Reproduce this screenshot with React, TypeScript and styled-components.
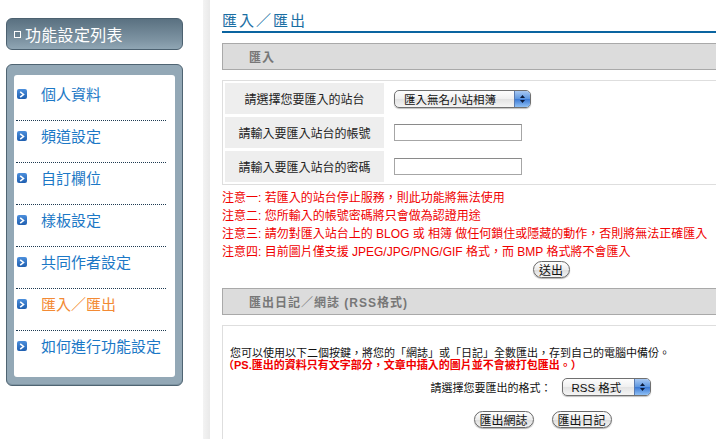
import React from "react";
import styled, { createGlobalStyle } from "styled-components";

const Global = createGlobalStyle`
  html, body { margin: 0; padding: 0; background: #fff; overflow: hidden; }
  body { font-family: "Liberation Sans", "Noto Sans CJK TC", sans-serif; }
`;

const Page = styled.div`
  display: flex;
  align-items: stretch;
  width: 900px;
  height: 439px;
`;

const Sidebar = styled.div`
  width: 177px;
  padding: 18px 20px 0 6px;
  flex: none;
`;

const SideHeader = styled.div`
  height: 30px;
  border: 1px solid #4c6170;
  border-radius: 6px;
  background: linear-gradient(#5a7181, #7d93a2 70%, #90a6b4);
  display: flex;
  align-items: center;
  padding-left: 7px;
  gap: 4px;
  color: #fff;
  font-size: 16px;
  letter-spacing: 0.3px;
`;

const HeaderIcon = styled.span`
  width: 5px;
  height: 5px;
  border: 1px solid #fff;
  background: #6a8090;
  flex: none;
`;

const ListFrame = styled.div`
  margin-top: 14px;
  border: 1px solid #4f6472;
  border-radius: 6px;
  background: #93a8b6;
  padding: 10px 7px 8px 7px;
  box-shadow: inset 0 -1px 0 #7e94a2;
`;

const ListInner = styled.div`
  background: #fff;
  border-radius: 3px;
  padding: 4px 0 4px 0;
`;

const Item = styled.div<{ $last?: boolean; $active?: boolean }>`
  display: flex;
  align-items: center;
  margin: 0 9px 0 2px;
  padding: 6px 0 15px 1px;
  line-height: 20px;
  border-bottom: ${(p) => (p.$last ? "1px solid transparent" : "1px dotted #1d3a52")};
  font-size: 15px;
  color: ${(p) => (p.$active ? "#f38a34" : "#1c78c6")};
`;

const Bullet = styled.span`
  width: 10px;
  height: 10px;
  border-radius: 2px;
  background: linear-gradient(#4c8fdc, #1f5fb0);
  display: flex;
  align-items: center;
  justify-content: center;
  margin-right: 14px;
  flex: none;
  margin-top: -2px;
`;

const Strip = styled.div`
  width: 7px;
  flex: none;
  background: linear-gradient(90deg, #f3f3f3, #e9e9e9);
`;

const Main = styled.div`
  width: 658px;
  padding-left: 12px;
  flex: none;
`;

const Title = styled.div`
  padding-top: 12px;
  line-height: 17px;
  padding-bottom: 2px;
  border-bottom: 2px solid #0a64a0;
  color: #1a6ea3;
  font-size: 15px;
  letter-spacing: 2px;
`;

const SectionHeader = styled.div`
  margin-top: 10px;
  height: 25px;
  border: 1px solid #a9a9a9;
  background: #dcdcdc;
  display: flex;
  align-items: center;
  padding-left: 26px;
  color: #777;
  font-size: 12px;
  letter-spacing: 1px;
  font-weight: bold;
`;

const FormBox = styled.div`
  margin-top: 10px;
  border: 1px solid #dedede;
  padding: 2px;
  display: flex;
  flex-direction: column;
  gap: 3px;
`;

const FormRow = styled.div`
  display: flex;
  height: 31px;
  align-items: stretch;
`;

const LabelCell = styled.div`
  width: 159px;
  background: #eeeeee;
  display: flex;
  align-items: center;
  justify-content: center;
  font-size: 12px;
  color: #222;
`;

const ValueCell = styled.div`
  display: flex;
  align-items: center;
  padding-left: 10px;
`;

const SelectBox = styled.div<{ $w: number }>`
  width: ${(p) => p.$w}px;
  height: 16px;
  border: 1px solid #707070;
  border-radius: 5px;
  display: flex;
  overflow: hidden;
  background: linear-gradient(#fdfdfd, #f0f0f0 50%, #e2e2e2 51%, #f5f5f5);
  box-shadow: 0 1px 1px rgba(0,0,0,0.25);
  font-size: 11.5px;
  color: #111;
`;

const SelectText = styled.div`
  flex: 1;
  display: flex;
  align-items: center;
  padding-left: 9px;
`;

const SelectArrow = styled.div`
  width: 15px;
  border-left: 1px solid #5a7bb0;
  background: linear-gradient(#a8c8f2, #5c96e0 50%, #3a78d4 51%, #8fc0f5);
  display: flex;
  align-items: center;
  justify-content: center;
`;

const TextInput = styled.div`
  width: 126px;
  height: 15px;
  border: 1px solid #a6a6a6;
  border-top-color: #8a8a8a;
  background: #fff;
`;

const Notes = styled.div`
  padding-top: 4px;
  font-size: 12px;
  line-height: 18px;
  color: #f00000;
`;

const Center = styled.div<{ $gap?: number; $top?: number; $shift?: number }>`
  display: flex;
  justify-content: center;
  align-items: center;
  gap: ${(p) => p.$gap ?? 0}px;
  margin-top: ${(p) => p.$top ?? 0}px;
  padding-right: ${(p) => p.$shift ?? 0}px;
`;

const Button = styled.div<{ $w: number }>`
  width: ${(p) => p.$w}px;
  height: 15px;
  border: 1px solid #6a6a6a;
  border-radius: 9px;
  background: linear-gradient(#ffffff, #ececec 50%, #dcdcdc 51%, #f4f4f4);
  box-shadow: 0 1px 1px rgba(0,0,0,0.3);
  display: flex;
  align-items: center;
  justify-content: center;
  font-size: 12px;
  color: #111;
`;

const ExportBox = styled.div`
  margin-top: 10px;
  border: 1px solid #dedede;
  border-bottom: none;
  height: 130px;
  padding: 21px 0 0 7px;
`;

const ExportText = styled.div`
  font-size: 11px;
  line-height: 12px;
  color: #111;
`;

const ExportNote = styled.div`
  font-size: 11px;
  line-height: 12px;
  color: #f00000;
  font-weight: bold;
  margin-left: -7px;
`;

const FormatLabel = styled.span`
  font-size: 11px;
  color: #111;
  margin-right: 10px;
`;

const Arrows = () => (
  <svg width="7" height="10" viewBox="0 0 7 10">
    <path d="M3.5 1 L6 4 H1 Z" fill="#0a1a3a" />
    <path d="M3.5 9 L6 6 H1 Z" fill="#0a1a3a" />
  </svg>
);

const Chevron = () => (
  <svg width="6" height="7" viewBox="0 0 6 7">
    <path d="M1.2 0.8 L4.5 3.5 L1.2 6.2" stroke="#fff" strokeWidth="1.6" fill="none" />
  </svg>
);

const Select = ({ w, text }: { w: number; text: string }) => (
  <SelectBox $w={w}>
    <SelectText>{text}</SelectText>
    <SelectArrow>
      <Arrows />
    </SelectArrow>
  </SelectBox>
);

const items = ["個人資料", "頻道設定", "自訂欄位", "樣板設定", "共同作者設定", "匯入／匯出", "如何進行功能設定"];

export default function App() {
  return (
    <>
      <Global />
      <Page>
        <Sidebar>
          <SideHeader>
            <HeaderIcon />
            功能設定列表
          </SideHeader>
          <ListFrame>
            <ListInner>
              {items.map((t, i) => (
                <Item key={t} $last={i === items.length - 1} $active={t === "匯入／匯出"}>
                  <Bullet>
                    <Chevron />
                  </Bullet>
                  {t}
                </Item>
              ))}
            </ListInner>
          </ListFrame>
        </Sidebar>
        <Strip />
        <Main>
          <Title>匯入／匯出</Title>
          <SectionHeader>匯入</SectionHeader>
          <FormBox>
            <FormRow>
              <LabelCell>請選擇您要匯入的站台</LabelCell>
              <ValueCell>
                <Select w={135} text="匯入無名小站相簿" />
              </ValueCell>
            </FormRow>
            <FormRow>
              <LabelCell>請輸入要匯入站台的帳號</LabelCell>
              <ValueCell>
                <TextInput />
              </ValueCell>
            </FormRow>
            <FormRow>
              <LabelCell>請輸入要匯入站台的密碼</LabelCell>
              <ValueCell>
                <TextInput />
              </ValueCell>
            </FormRow>
          </FormBox>
          <Notes>
            <div>注意一: 若匯入的站台停止服務，則此功能將無法使用</div>
            <div>注意二: 您所輸入的帳號密碼將只會做為認證用途</div>
            <div>注意三: 請勿對匯入站台上的 BLOG 或 相簿 做任何鎖住或隱藏的動作，否則將無法正確匯入</div>
            <div>注意四: 目前圖片僅支援 JPEG/JPG/PNG/GIF 格式，而 BMP 格式將不會匯入</div>
          </Notes>
          <Center>
            <Button $w={35}>送出</Button>
          </Center>
          <SectionHeader>匯出日記／網誌 (RSS格式)</SectionHeader>
          <ExportBox>
            <ExportText>您可以使用以下二個按鍵，將您的「網誌」或「日記」全數匯出，存到自己的電腦中備份。</ExportText>
            <ExportNote>（PS.匯出的資料只有文字部分，文章中插入的圖片並不會被打包匯出。）</ExportNote>
            <Center $top={7} $shift={28}>
              <FormatLabel>請選擇您要匯出的格式：</FormatLabel>
              <Select w={87} text="RSS 格式" />
            </Center>
            <Center $top={15} $shift={24} $gap={18}>
              <Button $w={58}>匯出網誌</Button>
              <Button $w={58}>匯出日記</Button>
            </Center>
          </ExportBox>
        </Main>
      </Page>
    </>
  );
}
